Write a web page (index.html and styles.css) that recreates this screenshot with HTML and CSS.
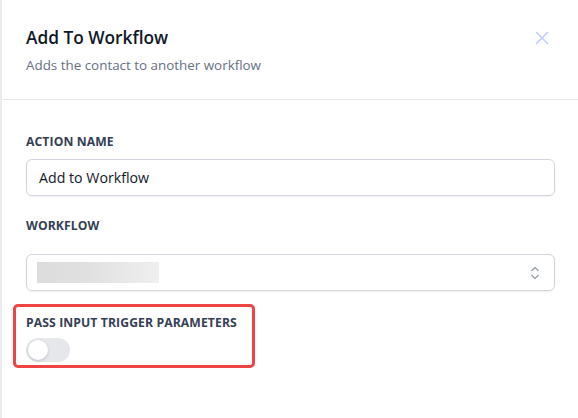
FILE: index.html
```html
<!DOCTYPE html>
<html>
<head>
<meta charset="utf-8">
<link rel="stylesheet" href="styles.css">
</head>
<body>
<div class="panel">
  <header class="head">
    <div class="head-text">
      <h1 class="title">Add To Workflow</h1>
      <p class="sub">Adds the contact to another workflow</p>
    </div>
    <button class="close" aria-label="Close">
      <svg width="16" height="16" viewBox="0 0 16 16"><path d="M2 2L14 14M14 2L2 14" stroke="#c3cdfb" stroke-width="1.7" fill="none"/></svg>
    </button>
  </header>
  <div class="body">
    <div class="field">
      <label class="label">ACTION NAME</label>
      <div class="input">Add to Workflow</div>
    </div>
    <div class="field">
      <label class="label">WORKFLOW</label>
      <div class="input select">
        <span class="skeleton"></span>
        <svg class="chev" width="10" height="14" viewBox="0 0 10 14"><path d="M1.5 5L5 1.5L8.5 5M1.5 9L5 12.5L8.5 9" stroke="#9ca3af" stroke-width="1.4" fill="none"/></svg>
      </div>
    </div>
    <div class="highlight">
      <label class="label">PASS INPUT TRIGGER PARAMETERS</label>
      <span class="toggle"><span class="knob"></span></span>
    </div>
  </div>
</div>
</body>
</html>
```
FILE: styles.css
```css
* { box-sizing: border-box; }
html, body { margin: 0; padding: 0; background: #fff; }
body {
  width: 578px; height: 418px; overflow: hidden;
  font-family: "Open Sans", "Noto Sans", sans-serif;
  color: #111827;
}
.panel {
  height: 418px;
  border-left: 2px solid #ececef;
}
.head {
  display: flex; justify-content: space-between; align-items: flex-start;
  padding: 26px 26px 0 24px;
  height: 100px;
  border-bottom: 1px solid #e5e7eb;
}
.title { margin: 0; font-size: 17.3px; font-weight: 600; line-height: 24px; color: #101828; }
.sub { margin: 6px 0 0; font-size: 13.4px; line-height: 18px; color: #667085; }
.close { border: 0; background: none; padding: 0; margin-top: 4px; margin-right: 2px; width: 16px; height: 16px; }
.close svg { display: block; }
.body { padding: 34px 23px 0 11px; }
.field { padding-left: 13px; margin-bottom: 22px; }
.label { display: block; font-size: 12.2px; font-weight: 700; line-height: 16px; color: #344054; letter-spacing: 0.1px; }
.input {
  margin-top: 9px;
  height: 37px;
  border: 1px solid #d0d5dd;
  border-radius: 6px;
  box-shadow: 0 1px 2px rgba(16,24,40,0.06);
  display: flex; align-items: center;
  padding: 0 12px;
  font-size: 14.2px; color: #111827;
}
.select { margin-top: 20px; justify-content: space-between; padding: 0 12px 0 10px; }
.skeleton {
  width: 122px; height: 21px;
  background: linear-gradient(90deg, #dcdcdc 0%, #e0e0e0 40%, #efefef 100%);
}
.chev { margin-right: 2px; }
.highlight {
  margin-top: -9px;
  width: 242px; height: 64px;
  border: 3px solid #ef4444;
  border-radius: 5px;
  padding: 8px 0 0 10px;
}
.highlight .label { line-height: 16px; }
.toggle {
  display: block; margin-top: 7px;
  width: 44px; height: 24px; border-radius: 12px;
  background: #e5e7eb; position: relative;
}
.knob {
  position: absolute; left: 2px; top: 2px;
  width: 20px; height: 20px; border-radius: 50%;
  background: #fff; box-shadow: 0 1px 3px rgba(16,24,40,0.2);
}
```
